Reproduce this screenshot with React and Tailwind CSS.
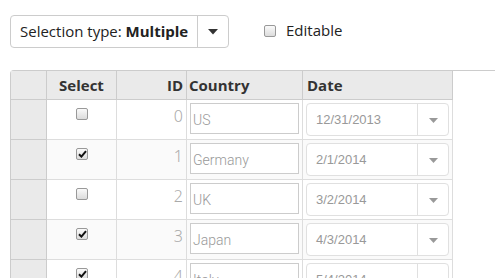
import React from 'react';

const rows = [
  { id: 0, country: 'US', date: '12/31/2013', sel: false },
  { id: 1, country: 'Germany', date: '2/1/2014', sel: true },
  { id: 2, country: 'UK', date: '3/2/2014', sel: false },
  { id: 3, country: 'Japan', date: '4/3/2014', sel: true },
  { id: 4, country: 'Italy', date: '5/4/2014', sel: true },
];

function Check({ checked }) {
  return (
    <div className="w-[12px] h-[12px] rounded-[2px] border border-[#999] bg-gradient-to-b from-[#fafafa] to-[#dcdcdc] flex items-center justify-center">
      {checked && (
        <svg width="9" height="8" viewBox="0 0 9 8">
          <path d="M1 4.2 L3.4 6.6 L8 1.2" fill="none" stroke="#111" strokeWidth="2" />
        </svg>
      )}
    </div>
  );
}

function Arrow({ color, w = 9 }) {
  return (
    <svg width={w} height={w / 2 + 1} viewBox="0 0 10 6">
      <path d="M0 0 L10 0 L5 5.5 Z" fill={color} />
    </svg>
  );
}

export default function App() {
  return (
    <div className="h-[278px] overflow-hidden bg-white font-['Open_Sans',sans-serif] text-[#333]">
      {/* toolbar */}
      <div className="flex items-center pl-[10px] pt-[15px]">
        <div className="flex h-[33px] w-[219px] rounded-[4px] border border-[#ccc]">
          <div className="flex-1 flex items-center pl-[9px] text-[15px] text-[#222] whitespace-nowrap">
            Selection type:&nbsp;<b>Multiple</b>
          </div>
          <div className="w-[31px] border-l border-[#ccc] flex items-center justify-center">
            <Arrow color="#333" w={10} />
          </div>
        </div>
        <div className="ml-[35px] flex items-center gap-[10px] -mt-[2px]">
          <Check checked={false} />
          <span className="text-[15px] text-[#222]">Editable</span>
        </div>
      </div>

      {/* grid */}
      <div className="mt-[22px] ml-[10px] border-t border-l border-[#ccc] rounded-tl-[4px]">
        <div className="flex w-fit h-[29px] text-[15px] font-bold text-[#333]">
          <div className="w-[36px] bg-[#eaeaea] border-r border-b border-[#ccc]" />
          <div className="w-[70px] bg-[#eaeaea] border-r border-b border-[#ccc] flex items-center justify-center">Select</div>
          <div className="w-[70px] bg-[#eaeaea] border-r border-b border-[#ccc] flex items-center justify-end pr-[3px]">ID</div>
          <div className="w-[116px] bg-[#eaeaea] border-r border-b border-[#ccc] flex items-center pl-[2px]">Country</div>
          <div className="w-[150px] bg-[#eaeaea] border-r border-b border-[#ccc] flex items-center pl-[4px]">Date</div>
        </div>
        {rows.map((r, i) => (
          <div key={r.id} className={`flex w-fit h-[40px] ${i % 2 ? 'bg-[#fafafa]' : 'bg-white'}`}>
            <div className="w-[36px] bg-[#eaeaea] border-r border-b border-[#ccc]" />
            <div className="w-[70px] border-r border-b border-[#ddd] flex justify-center pt-[8px] pl-[1px]">
              <Check checked={r.sel} />
            </div>
            <div className="w-[70px] border-r border-b border-[#ddd] flex justify-end pr-[3px] pt-[6px] text-[16px] leading-[20px] text-[#aaa] font-['Noto_Sans',sans-serif] font-light">
              {r.id}
            </div>
            <div className="w-[116px] border-r border-b border-[#ddd] pl-[3px] pt-[3px]">
              <div className="h-[31px] w-[109px] border border-[#ccc] bg-white flex items-center pl-[2px] pt-[4px] text-[14px] text-[#999] font-['Roboto',sans-serif] font-light">
                {r.country}
              </div>
            </div>
            <div className="w-[150px] border-r border-b border-[#ddd] pl-[3px] pt-[3px]">
              <div className="h-[33px] w-[143px] rounded-[4px] border border-[#e0e0e0] bg-white flex">
                <div className="flex-1 flex items-center pl-[9px] text-[13px] text-[#999] font-['Liberation_Sans',sans-serif]">
                  {r.date}
                </div>
                <div className="w-[31px] border-l border-[#e0e0e0] flex items-center justify-center pt-[2px]">
                  <Arrow color="#999" w={9} />
                </div>
              </div>
            </div>
          </div>
        ))}
      </div>
    </div>
  );
}
